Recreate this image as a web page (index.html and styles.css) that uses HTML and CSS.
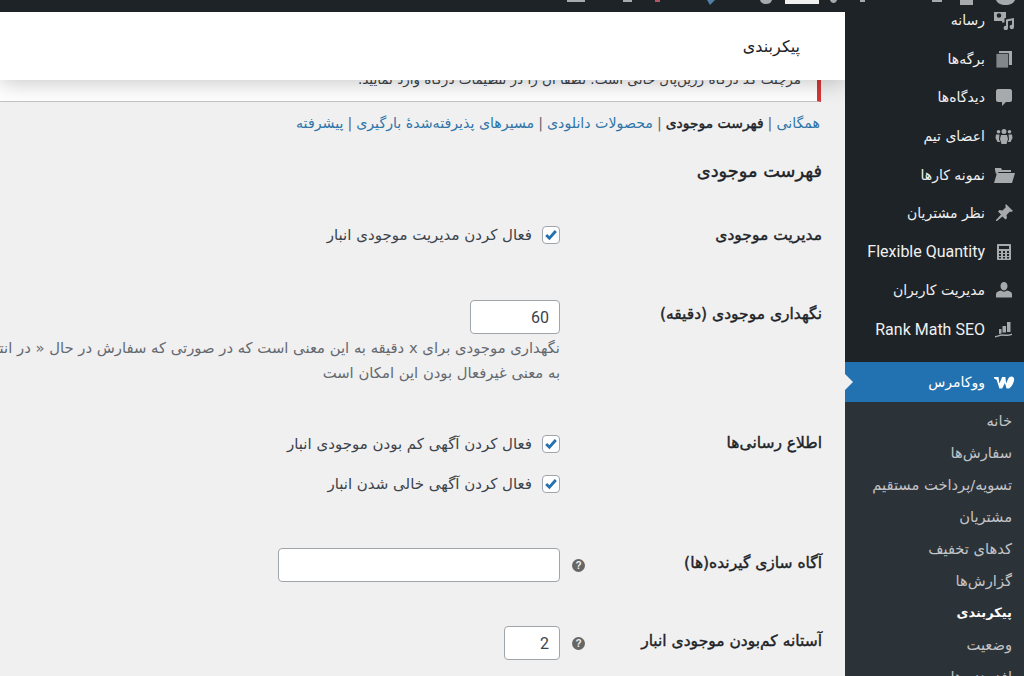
FILE: index.html
```html
<!DOCTYPE html>
<html lang="fa" dir="rtl">
<head>
    <meta charset="UTF-8">
    <title>پیکربندی</title>
    <link rel="stylesheet" href="styles.css">
</head>
<body>
<div class="adminbar">
    <!-- bottom edge of the toolbar items, the rest is scrolled out of view -->
    <svg class="barbits" viewBox="0 0 1024 12">
        <rect x="567" y="0" width="18" height="2" fill="#a7aaad"/>
        <rect x="623" y="0" width="9" height="2" fill="#a7aaad"/>
        <rect x="655" y="0" width="5" height="2" fill="#b3566a"/>
        <path d="M707 0h8l-5 5z" fill="#4f7fa8"/>
        <path d="M760 0h12c-1 3-3 4-6 4s-5-1-6-4z" fill="#a7aaad"/>
        <rect x="785" y="0" width="34" height="4" fill="#f0f0f1"/>
        <path d="M830 0h7c-.5 2-2 3-3.500 3S830.500 2 830 0z" fill="#a7aaad"/>
        <rect x="860" y="0" width="5" height="2" fill="#a7aaad"/>
        <rect x="932" y="0" width="10" height="2" fill="#a7aaad"/>
        <rect x="960" y="0" width="13" height="5" fill="#a7aaad"/>
        <path d="M996 0h19c-1 3-5 5-9.500 5S997 3 996 0z" fill="#a7aaad"/>
    </svg>
</div>
<div class="wrap">
    <nav class="sidebar">
        <ul class="menu">
            <li><svg class="ico" viewBox="0 0 20 20"><path fill-rule="evenodd" d="M0 1h12v7h-1.500v4.500H8V11H0zM5 3.200a2.300 2.300 0 1 0 0 4.600 2.300 2.300 0 0 0 0-4.600z"/><path d="M12 9.500l8-1.500v9a2.200 2.200 0 1 1-2-2.200V10.500l-4 .8V18a2.200 2.200 0 1 1-2-2.200z"/></svg><span>رسانه</span></li>
            <li><svg class="ico" viewBox="0 0 20 20"><path d="M5 2h13v14H5z"/><path class="shade" d="M2 4.500h12.500V19H2z"/></svg><span>برگه‌ها</span></li>
            <li><svg class="ico" viewBox="0 0 20 20"><path d="M4 2h12c1 0 2 1 2 2v9c0 1-1 2-2 2h-4l-4 4v-4H4c-1 0-2-1-2-2V4c0-1 1-2 2-2z"/></svg><span>دیدگاه‌ها</span></li>
            <li><svg class="ico" viewBox="0 0 20 20"><path d="M10 3a2 2 0 1 1 0 5 2 2 0 0 1 0-5zM4.500 4a1.800 1.800 0 1 1 0 3.600 1.800 1.800 0 0 1 0-3.600zM15.500 4a1.800 1.800 0 1 1 0 3.600 1.800 1.800 0 0 1 0-3.600zM7 9h6l1 4-1.500 5h-5L6 13zM2 8.500h3.500L5 13l1 3H3.500L1.500 12zM14.500 8.500H18l.5 3.500-2 4H14l1-3z"/></svg><span>اعضای تیم</span></li>
            <li><svg class="ico ico-wide" viewBox="0 0 24 20"><path d="M3 5V3h6l1 2h9v2H7L4 9zM5 8h18l-3 10H2z"/></svg><span>نمونه کارها</span></li>
            <li><svg class="ico" viewBox="0 0 20 20"><path d="M12 1l7 7-2 1-1-.500-3.500 3.500.5 3-1.500 1.500-3-3L3 18l-1 0 0-1 5-5.500-3-3L5.500 7l3 .5L12 4l-.8-1z"/></svg><span>نظر مشتریان</span></li>
            <li><svg class="ico" viewBox="0 0 20 20"><path fill-rule="evenodd" d="M4 2h12c.6 0 1 .4 1 1v14c0 .6-.4 1-1 1H4c-.6 0-1-.4-1-1V3c0-.6.4-1 1-1zm1 2v3h10V4zm0 5v2h2V9zm4 0v2h2V9zm4 0v2h2V9zm-8 3v2h2v-2zm4 0v2h2v-2zm4 0v2h2v-2zm-8 3v1.500h2V15zm4 0v1.500h2V15zm4 0v1.500h2V15z"/></svg><span class="latin">Flexible Quantity</span></li>
            <li><svg class="ico" viewBox="0 0 20 20"><path d="M10 2c2.200 0 3.500 1.800 3.500 4S12.200 10.500 10 10.500 6.500 8.200 6.500 6 7.800 2 10 2zM7 10.500c1.800 1.500 4.200 1.500 6 0 2.500.5 5 1.500 5 3.500v3.500H2V14c0-2 2.500-3 5-3.500z"/></svg><span>مدیریت کاربران</span></li>
            <li><svg class="ico" viewBox="0 0 20 20"><path d="M13 3h3.500v10H13zM8.500 7H12v6.500H8.500zM5 10h2.500v4.500L5 15zM1 17c3-.2 5-2 8-1.800 3 .2 5 .8 9-.7v1.500c-4 1.500-6 1-9 .8-3-.2-5 1.400-8 1.700z"/></svg><span class="latin">Rank Math SEO</span></li>
        </ul>
        <div class="current">
            <svg class="woo" viewBox="0 0 24 14"><path d="M1 1.500h5l1 7 3-7h3.500l.8 7 2.300-5c.7-1.700 2-2.500 3.500-2.500 2 0 3.200 1.500 3 3.500-.3 3-2.500 7.500-5.500 9.500h-2.800l-1.800-6-3 6H7L4 4.500 1.500 3.500z"/></svg>
            <span>ووکامرس</span>
        </div>
        <ul class="submenu">
            <li>خانه</li>
            <li>سفارش‌ها</li>
            <li>تسویه/پرداخت مستقیم</li>
            <li>مشتریان</li>
            <li>کدهای تخفیف</li>
            <li>گزارش‌ها</li>
            <li class="active">پیکربندی</li>
            <li>وضعیت</li>
            <li>افزودنی‌ها</li>
        </ul>
    </nav>
    <main class="content">
        <header class="pagehead"><h1>پیکربندی</h1></header>
        <div class="notice"><p>مرچنت کد درگاه زرین‌پال خالی است. لطفا آن را در تنظیمات درگاه وارد نمایید.</p></div>
        <div class="body">
            <ul class="tabs">
                <li><a href="#">همگانی</a></li>
                <li><b>فهرست موجودی</b></li>
                <li><a href="#">محصولات دانلودی</a></li>
                <li><a href="#">مسیرهای پذیرفته‌شدهٔ بارگیری</a></li>
                <li><a href="#">پیشرفته</a></li>
            </ul>
            <h2>فهرست موجودی</h2>
            <div class="row row-manage">
                <div class="label">مدیریت موجودی</div>
                <div class="field">
                    <label class="check"><i class="box"><svg viewBox="0 0 20 20"><path d="M4 10l4 4 8-9" /></svg></i>فعال کردن مدیریت موجودی انبار</label>
                </div>
            </div>
            <div class="row row-hold">
                <div class="label">نگهداری موجودی (دقیقه)</div>
                <div class="field">
                    <input class="input input-num" type="text" dir="ltr" value="60">
                    <p class="desc">نگهداری موجودی برای x دقیقه به این معنی است که در صورتی که سفارش در حال « در انتظار پرداخت » باشد پس از این مدت لغو می‌شود. خالی گذاشتن<br>به معنی غیرفعال بودن این امکان است</p>
                </div>
            </div>
            <div class="row row-notify">
                <div class="label">اطلاع رسانی‌ها</div>
                <div class="field checks">
                    <label class="check"><i class="box"><svg viewBox="0 0 20 20"><path d="M4 10l4 4 8-9" /></svg></i>فعال کردن آگهی کم بودن موجودی انبار</label>
                    <label class="check"><i class="box"><svg viewBox="0 0 20 20"><path d="M4 10l4 4 8-9" /></svg></i>فعال کردن آگهی خالی شدن انبار</label>
                </div>
            </div>
            <div class="row row-recipient">
                <div class="label">آگاه سازی گیرنده(ها)</div>
                <div class="field inline">
                    <i class="help">?</i>
                    <input class="input input-wide" type="text">
                </div>
            </div>
            <div class="row row-low">
                <div class="label">آستانه کم‌بودن موجودی انبار</div>
                <div class="field inline">
                    <i class="help">?</i>
                    <input class="input input-small" type="text" dir="ltr" value="2">
                </div>
            </div>
        </div>
    </main>
</div>
</body>
</html>
```

FILE: styles.css
```css
*{
    margin:0;
    padding:0;
    box-sizing:border-box;
}
ul{
    list-style:none;
}
html,body{
    height:676px;
    overflow:hidden;
}
body{
    background:#f0f0f1;
    color:#3c434a;
    font-family:"DejaVu Sans","Noto Sans",sans-serif;
    font-size:13px;
}
.adminbar{
    height:12px;
    background:#1d2327;
}
.barbits{
    display:block;
    width:1024px;
    height:12px;
}
.wrap{
    display:flex;
    height:664px;
}
.sidebar{
    flex:none;
    width:179px;
    background:#1d2327;
    color:#f0f0f1;
    overflow:hidden;
}
.menu{
    margin-top:-11px;
    height:361px;
}
.menu li{
    display:flex;
    align-items:center;
    gap:9px;
    height:38.600px;
    padding-right:10px;
    font-size:14px;
}
.ico{
    flex:none;
    width:20px;
    height:20px;
    fill:#a7aaad;
}
.ico .shade{
    fill:#82878c;
    stroke:#1d2327;
    stroke-width:.8;
}
.ico-wide{
    width:24px;
    margin:0 -2px 0 -2px;
}
.latin{
    font-family:"Roboto",sans-serif;
    font-size:16px;
}
.current{
    position:relative;
    display:flex;
    align-items:center;
    gap:8px;
    height:40px;
    padding-right:9px;
    background:#2271b1;
    color:#fff;
    font-size:14px;
}
.current:after{
    content:"";
    position:absolute;
    right:100%;
    top:50%;
    margin-top:-8px;
    margin-right:-8px;
    border:8px solid transparent;
    border-right-width:0;
    border-left-color:#f0f0f1;
}
.woo{
    width:22px;
    height:14px;
    fill:#fff;
}
.submenu{
    background:#2c3338;
    padding-top:3px;
    height:300px;
}
.submenu li{
    height:32px;
    line-height:32px;
    padding-right:12px;
    color:#c3c4c7;
    font-size:14.700px;
}
.submenu .active{
    color:#fff;
    font-weight:bold;
    font-size:13px;
}
.content{
    flex:1;
    min-width:0;
    overflow:hidden;
}
.pagehead{
    position:relative;
    z-index:2;
    display:flex;
    align-items:center;
    height:68px;
    padding-right:45px;
    background:#fff;
    box-shadow:0 3px 22px rgba(0,0,0,.22);
}
.pagehead h1{
    font-size:16px;
    font-weight:normal;
    color:#1d2327;
}
.notice{
    height:22px;
    margin:0 24px 0 0;
    background:#fff;
    border-right:4px solid #d63638;
    border-bottom:1px solid #c3c4c7;
    overflow:hidden;
    white-space:nowrap;
}
.notice p{
    margin-top:-11px;
    padding-right:16px;
    line-height:20px;
    font-size:13.500px;
}
.body{
    width:1100px;
    padding-right:23px;
}
.tabs{
    display:flex;
    margin:10px 2px 0 0;
    line-height:22px;
    font-size:14.200px;
}
.tabs li+li:before{
    content:"|";
    margin:0 4px;
    color:#646970;
}
.tabs a{
    color:#2f75a8;
    text-decoration:none;
}
.tabs b{
    color:#1d2327;
    font-weight:normal;
    -webkit-text-stroke:.4px #1d2327;
    font-size:13.900px;
}
h2{
    margin-top:23px;
    font-size:17.800px;
    line-height:28px;
    color:#1d2327;
    font-weight:normal;
    -webkit-text-stroke:.4px #1d2327;
}
.row{
    display:flex;
}
.label{
    flex:none;
    width:262px;
    font-size:15.500px;
    font-weight:normal;
    -webkit-text-stroke:.4px #1d2327;
    color:#1d2327;
}
.field{
    flex:1;
}
.row-manage{
    margin-top:38px;
    line-height:24px;
}
.row-hold{
    margin-top:53px;
}
.row-hold .label{
    margin-top:5px;
}
.row-notify{
    margin-top:47px;
}
.row-notify .label{
    margin-top:2px;
}
.row-recipient{
    margin-top:52px;
    align-items:center;
}
.row-low{
    margin-top:44px;
    align-items:center;
}
.row-recipient .label,
.row-low .label{
    margin-bottom:5px;
}
.check{
    display:flex;
    align-items:center;
    gap:10px;
    height:24px;
    color:#3c434a;
    font-size:15px;
}
.checks{
    display:flex;
    flex-direction:column;
    gap:16px;
}
.box{
    flex:none;
    width:18px;
    height:18px;
    background:#fff;
    border:1px solid #a0a5aa;
    border-radius:4px;
}
.box svg{
    display:block;
    fill:none;
    stroke:#2271b1;
    stroke-width:3.500;
}
.input{
    display:block;
    height:34px;
    padding:0 10px;
    background:#fff;
    border:1px solid #a0a5aa;
    border-radius:4px;
    color:#3c434a;
    font-family:"Roboto",sans-serif;
    font-size:16px;
}
.input-num{
    width:90px;
    text-align:right;
}
.input-wide{
    width:282px;
}
.input-small{
    width:56px;
    text-align:right;
}
.desc{
    margin-top:1px;
    line-height:25px;
    color:#646970;
    font-size:14.800px;
    white-space:nowrap;
}
.inline{
    display:flex;
    flex-direction:row;
    align-items:center;
    margin-right:-25px;
    gap:12px;
}
.help{
    display:block;
    width:13px;
    height:13px;
    border-radius:50%;
    background:#666;
    color:#f0f0f1;
    font:bold 10px/13px "Liberation Sans",sans-serif;
    text-align:center;
    direction:ltr;
}
```
